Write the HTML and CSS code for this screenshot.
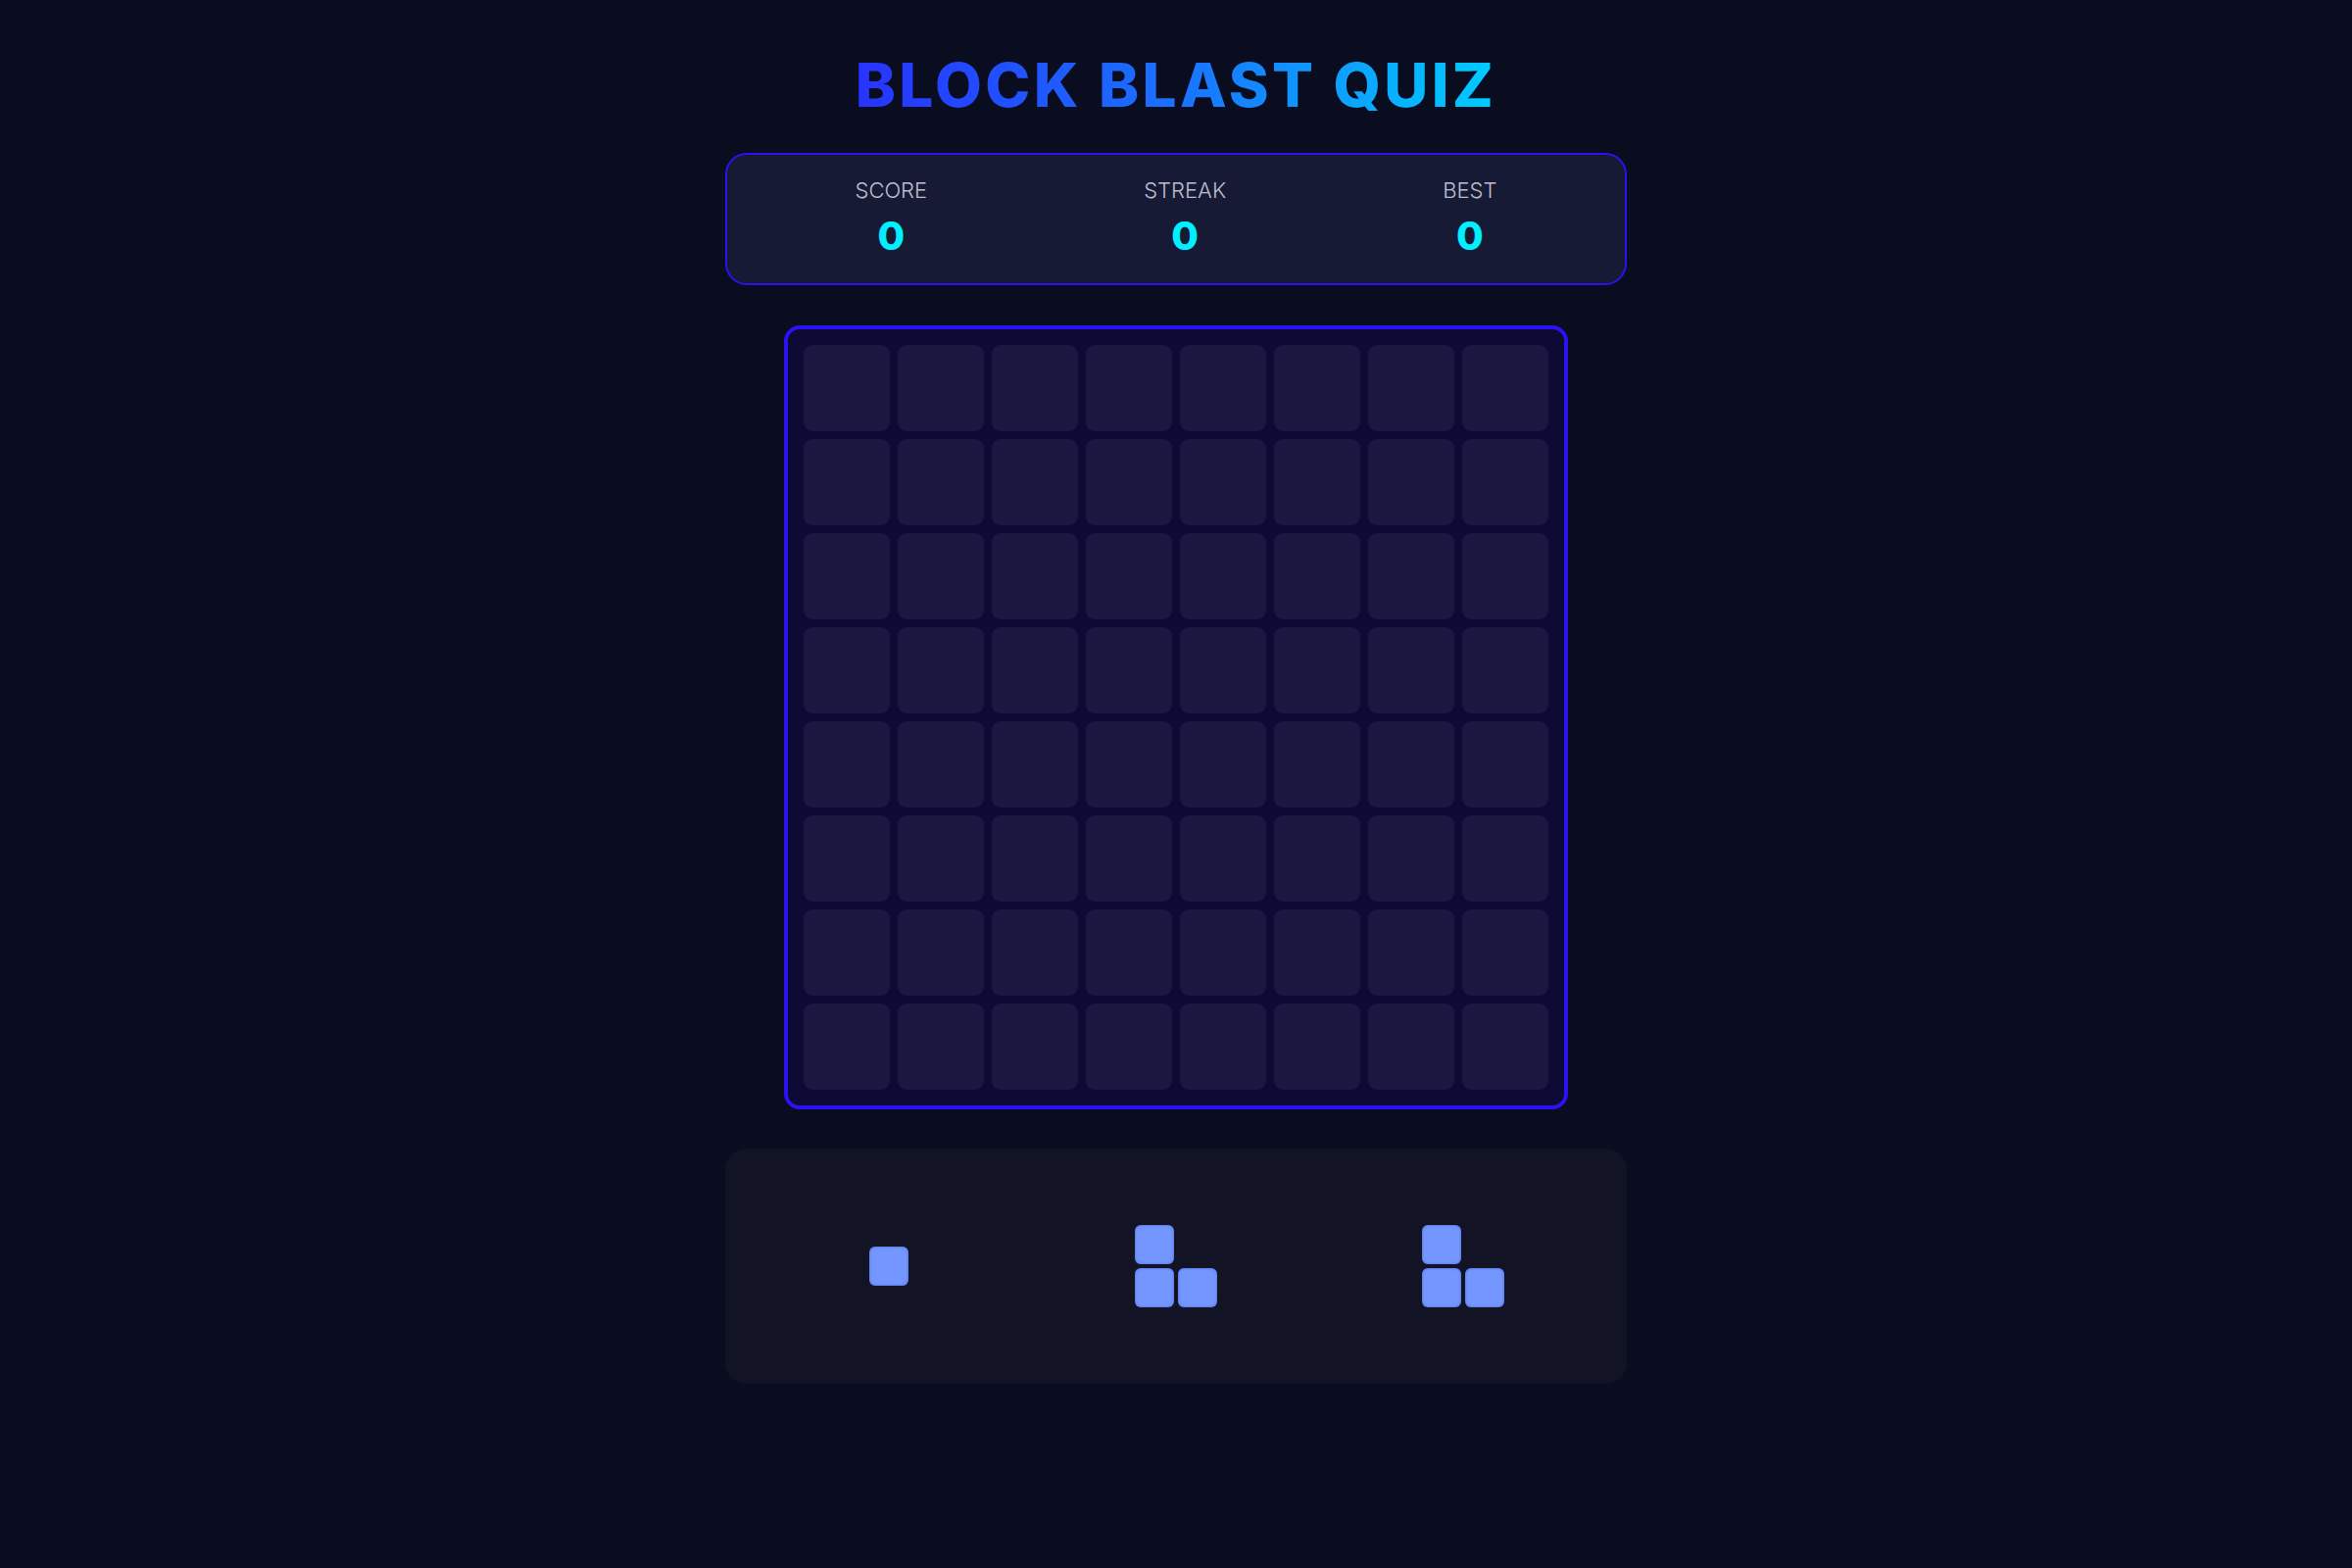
FILE: index.html
```html
<!DOCTYPE html>
<html lang="en">
<head>
<meta charset="utf-8">
<title>Block Blast Quiz</title>
<link rel="stylesheet" href="styles.css">
</head>
<body>
<main class="app">
  <header class="title-wrap"><h1 class="title">BLOCK BLAST QUIZ</h1></header>
  <section class="stats">
    <div class="stat"><div class="stat-label">SCORE</div><div class="stat-value">0</div></div>
    <div class="stat"><div class="stat-label">STREAK</div><div class="stat-value">0</div></div>
    <div class="stat"><div class="stat-label">BEST</div><div class="stat-value">0</div></div>
  </section>
  <section class="board">
    <div class="cell"></div><div class="cell"></div><div class="cell"></div><div class="cell"></div><div class="cell"></div><div class="cell"></div><div class="cell"></div><div class="cell"></div>
    <div class="cell"></div><div class="cell"></div><div class="cell"></div><div class="cell"></div><div class="cell"></div><div class="cell"></div><div class="cell"></div><div class="cell"></div>
    <div class="cell"></div><div class="cell"></div><div class="cell"></div><div class="cell"></div><div class="cell"></div><div class="cell"></div><div class="cell"></div><div class="cell"></div>
    <div class="cell"></div><div class="cell"></div><div class="cell"></div><div class="cell"></div><div class="cell"></div><div class="cell"></div><div class="cell"></div><div class="cell"></div>
    <div class="cell"></div><div class="cell"></div><div class="cell"></div><div class="cell"></div><div class="cell"></div><div class="cell"></div><div class="cell"></div><div class="cell"></div>
    <div class="cell"></div><div class="cell"></div><div class="cell"></div><div class="cell"></div><div class="cell"></div><div class="cell"></div><div class="cell"></div><div class="cell"></div>
    <div class="cell"></div><div class="cell"></div><div class="cell"></div><div class="cell"></div><div class="cell"></div><div class="cell"></div><div class="cell"></div><div class="cell"></div>
    <div class="cell"></div><div class="cell"></div><div class="cell"></div><div class="cell"></div><div class="cell"></div><div class="cell"></div><div class="cell"></div><div class="cell"></div>
  </section>
  <section class="tray">
    <div class="slot">
      <div class="piece piece-1"><div class="blk"></div></div>
    </div>
    <div class="slot">
      <div class="piece piece-l">
        <div class="blk"></div><div class="gap-blk"></div>
        <div class="blk"></div><div class="blk"></div>
      </div>
    </div>
    <div class="slot">
      <div class="piece piece-l">
        <div class="blk"></div><div class="gap-blk"></div>
        <div class="blk"></div><div class="blk"></div>
      </div>
    </div>
  </section>
</main>
</body>
</html>
```
FILE: styles.css
```css
* { box-sizing: border-box; }
html, body { margin: 0; padding: 0; }
body {
  background: #0a0c1f;
  font-family: "Inter", "Noto Sans", sans-serif;
  color: #fff;
  min-height: 1600px;
}
.app {
  width: 920px;
  margin: 0 auto;
  display: flex;
  flex-direction: column;
  align-items: center;
}
.title-wrap {
  margin-top: 50px;
  text-align: center;
}
.title {
  display: inline-block;
  margin: 0;
  font-size: 62px;
  line-height: 1.2;
  font-weight: 800;
  letter-spacing: 3.4px;
  background: linear-gradient(90deg, #2733ff 0%, #1a72ff 50%, #00cdff 100%);
  -webkit-background-clip: text;
  background-clip: text;
  color: transparent;
}
.stats {
  margin-top: 32px;
  width: 920px;
  height: 135px;
  border: 2px solid #2a12f2;
  border-radius: 22px;
  background: #171a34;
  padding: 23px 20px 0;
  display: flex;
  justify-content: space-around;
}
.stat {
  display: flex;
  flex-direction: column;
  align-items: center;
}
.stat-label {
  font-size: 22px;
  line-height: 26px;
  font-weight: 300;
  color: #bcbecd;
}
.stat-value {
  margin-top: 10px;
  font-size: 40px;
  line-height: 47px;
  font-weight: 800;
  color: #00f0ff;
}
.board {
  margin-top: 41px;
  width: 800px;
  border: 4px solid #2a12f2;
  border-radius: 16px;
  background: #0e0a36;
  padding: 16px;
  display: grid;
  grid-template-columns: repeat(8, 88px);
  grid-auto-rows: 88px;
  gap: 8px;
}
.cell {
  background: #1a1840;
  border-radius: 9px;
}
.tray {
  margin-top: 40px;
  width: 920px;
  height: 240px;
  border-radius: 22px;
  background: #121426;
  padding: 0 20px;
  display: grid;
  grid-template-columns: repeat(3, 1fr);
  align-items: center;
}
.slot {
  display: flex;
  justify-content: center;
  align-items: center;
}
.piece {
  display: grid;
  gap: 4px;
}
.piece-1 { grid-template-columns: 40px; grid-auto-rows: 40px; }
.piece-l { grid-template-columns: 40px 40px; grid-auto-rows: 40px; }
.blk {
  background: #7496ff;
  border-radius: 6px;
  box-shadow: inset 0 0 3px rgba(40, 60, 170, 0.55);
}
```
